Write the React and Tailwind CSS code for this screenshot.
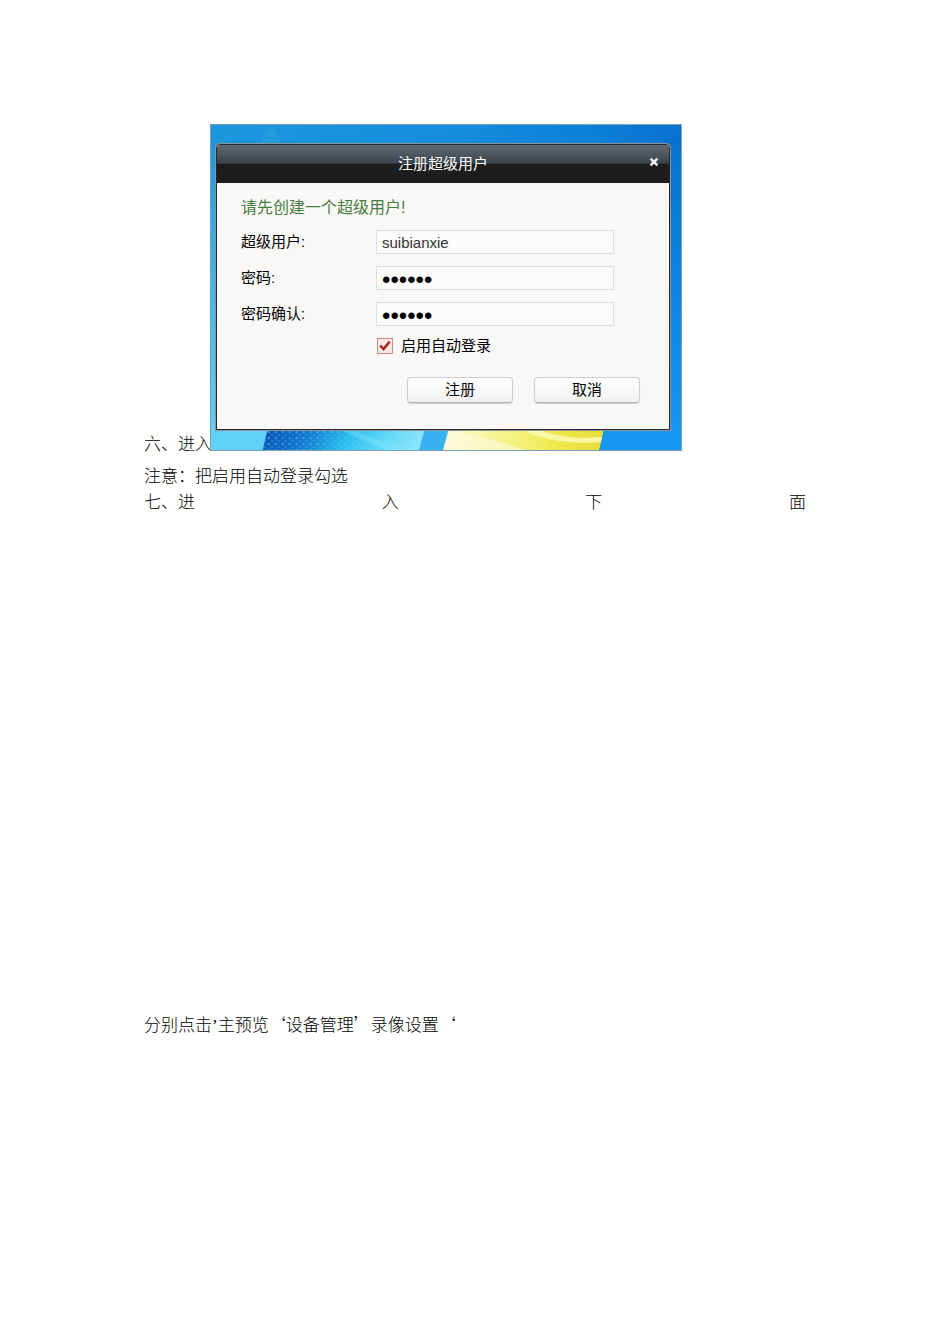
import React from "react";

const uiFont = "font-['Liberation_Sans','Noto_Sans_CJK_SC',sans-serif]";

function Wallpaper() {
  return (
    <svg
      className="absolute inset-0 h-full w-full"
      viewBox="0 0 472 326"
      preserveAspectRatio="none"
      aria-hidden="true"
    >
      <defs>
        <linearGradient id="top" x1="0" x2="1" y1="0" y2="0">
          <stop offset="0" stopColor="#1c97dd" />
          <stop offset="0.5" stopColor="#168edd" />
          <stop offset="0.8" stopColor="#0d80d8" />
          <stop offset="1" stopColor="#0873cf" />
        </linearGradient>
        <linearGradient id="left" x1="0" x2="0" y1="0" y2="1">
          <stop offset="0" stopColor="#1c97dd" />
          <stop offset="0.35" stopColor="#37b2e6" />
          <stop offset="1" stopColor="#66d2f4" />
        </linearGradient>
        <linearGradient id="right" x1="0" x2="0" y1="0" y2="1">
          <stop offset="0" stopColor="#0873cf" />
          <stop offset="0.6" stopColor="#0f89e8" />
          <stop offset="1" stopColor="#1697f2" />
        </linearGradient>
        <linearGradient id="sea" x1="0" x2="1" y1="0" y2="0.1">
          <stop offset="0" stopColor="#0a52b4" />
          <stop offset="0.3" stopColor="#1279cf" />
          <stop offset="0.55" stopColor="#27bdee" />
          <stop offset="0.8" stopColor="#66dbf8" />
          <stop offset="1" stopColor="#8ae4fa" />
        </linearGradient>
        <linearGradient id="sun" x1="0" x2="1" y1="0" y2="0">
          <stop offset="0" stopColor="#fbfad0" />
          <stop offset="0.4" stopColor="#f5f387" />
          <stop offset="0.7" stopColor="#eee94c" />
          <stop offset="1" stopColor="#e6dc3c" />
        </linearGradient>
        <pattern id="dots" width="7" height="6" patternUnits="userSpaceOnUse">
          <circle cx="2" cy="2" r="1" fill="#6fc7f2" opacity="0.65" />
          <circle cx="5" cy="5" r="0.8" fill="#6fc7f2" opacity="0.5" />
        </pattern>
      </defs>
      <rect width="472" height="326" fill="url(#top)" />
      <path d="M50 20 Q54 4 62 2 Q68 8 70 20Z" fill="#4db4e8" opacity="0.2" />
      <rect y="18" width="12" height="308" fill="url(#left)" />
      <rect x="455" y="18" width="17" height="308" fill="url(#right)" />
      <rect y="300" width="60" height="26" fill="#62d1f6" />
      <path d="M58 300H220L210 326H52Z" fill="url(#sea)" />
      <path d="M58 300H150L165 326H52Z" fill="url(#dots)" />
      <path d="M130 300 Q165 318 210 326H180Q145 316 122 300Z" fill="#8ae4fa" opacity="0.35" />
      <path d="M216 300H242L234 326H209Z" fill="#37b1ef" />
      <path d="M241 300H396L390 326H233Z" fill="url(#sun)" />
      <path d="M318 300 Q345 317 393 313L392 318Q335 322 302 300Z" fill="#fbf9b4" opacity="0.85" />
      <path d="M238 306 Q275 312 315 326H233Z" fill="#fdfce4" opacity="0.55" />
      <path d="M396 300H472V326H390Z" fill="#1597f2" />
    </svg>
  );
}

function Field({ id, label, type, value }) {
  return (
    <div className="flex items-center">
      <label htmlFor={id} className="w-[135px] shrink-0 text-[15px] leading-6">
        {label}
      </label>
      <input
        id={id}
        type={type}
        defaultValue={value}
        className={
          "h-6 w-[238px] min-w-0 rounded-none border border-[#dcdee3] bg-[#fcfcfc] px-[5px] py-0 outline-none " +
          (type === "password"
            ? "pt-[3px] text-[24px] leading-5 text-black"
            : "text-[15px] leading-5 text-[#333]")
        }
      />
    </div>
  );
}

function DialogButton({ type, children }) {
  return (
    <button
      type={type}
      className="h-[26px] w-[106px] rounded-[4px] border border-[#cfcfd1] border-b-[#b4b4b6] bg-linear-to-b from-white to-[#f1f1f1] text-[15px] leading-5 shadow-[0_1px_1px_#cfcfcf]"
    >
      {children}
    </button>
  );
}

function RegisterDialog() {
  return (
    <form
      className="relative rounded-t-[4px] border border-[#25282c] bg-[#f9f8f7] text-black shadow-[0_0_0_1px_#8e9296]"
      onSubmit={(e) => e.preventDefault()}
    >
      <header className="grid h-[38px] grid-cols-[1fr_auto_1fr] items-center rounded-t-[3px] bg-[linear-gradient(#626970_0%,#3a434e_48%,#1d1d1d_50%,#1d1d1d_100%)] px-2.5 text-white">
        <h1 className="col-start-2 text-[15px] leading-5">注册超级用户</h1>
        <button type="button" aria-label="关闭" className="justify-self-end pb-1">
          <svg className="h-2.5 w-2.5" viewBox="0 0 10 10" fill="none" stroke="#f4f4f4" strokeWidth="2.4">
            <path d="M1.6 1.6 8.4 8.4M8.4 1.6 1.6 8.4" />
          </svg>
        </button>
      </header>
      <div className="px-6 pt-[13px] pb-[26px]">
        <p className="text-[16px] leading-6 text-[#4a7d42]">请先创建一个超级用户!</p>
        <div className="mt-2.5 flex flex-col gap-3">
          <Field id="user" label="超级用户:" type="text" value="suibianxie" />
          <Field id="pass" label="密码:" type="password" value="123456" />
          <Field id="confirm" label="密码确认:" type="password" value="123456" />
        </div>
        <label className="mt-2 ml-[136px] flex items-center gap-2 text-[15px] leading-6">
          <span className="relative flex h-4 w-4">
            <input
              type="checkbox"
              defaultChecked
              className="peer h-4 w-4 appearance-none border border-[#d08a86] bg-[#f8e9e7]"
            />
            <svg
              className="pointer-events-none absolute inset-0 hidden h-4 w-4 peer-checked:block"
              viewBox="0 0 16 16"
              fill="none"
              stroke="#ae2a22"
              strokeWidth="2.6"
            >
              <path d="M3.2 7.6 6.6 11 12.6 3.6" />
            </svg>
          </span>
          启用自动登录
        </label>
        <div className="mt-[19px] mr-[5px] flex justify-end gap-[21px]">
          <DialogButton type="submit">注册</DialogButton>
          <DialogButton type="button">取消</DialogButton>
        </div>
      </div>
    </form>
  );
}

export default function App() {
  return (
    <main className="min-h-screen bg-white px-36 pt-[124px] pb-16 font-['Noto_Sans_CJK_SC',sans-serif] text-[17px] leading-5 font-light text-black">
      <div className="flex items-end">
        <p className="w-[66px] shrink-0 whitespace-nowrap">六、进入</p>
        <section
          className={
            "relative mb-0.5 w-[472px] border border-[#7f9fb5] pt-[19px] pr-[11px] pb-5 pl-[5px] font-normal " + uiFont
          }
        >
          <Wallpaper />
          <RegisterDialog />
        </section>
      </div>
      <p className="mt-3">注意：把启用自动登录勾选</p>
      <p className="mt-1.5 flex justify-between">
        <span>七、进</span>
        <span>入</span>
        <span>下</span>
        <span>面</span>
      </p>
      <p className="mt-[503px]">
        分别点击<span className="font-['Liberation_Serif',serif]">’</span>主预览‘设备管理’录像设置‘
      </p>
    </main>
  );
}
